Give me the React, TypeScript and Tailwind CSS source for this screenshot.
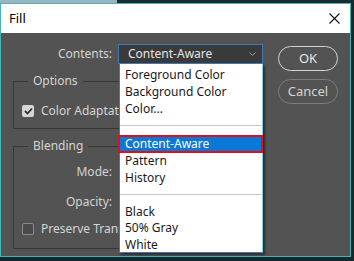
import * as React from 'react';

const font = { fontFamily: '"Noto Sans", "Open Sans", sans-serif' };

const upper = ['Foreground Color', 'Background Color', 'Color...'];
const middle = ['Pattern', 'History'];
const lower = ['Black', '50% Gray', 'White'];

function Item({ label }: { label: string }) {
  return <div className="flex h-[16.7px] items-center pl-[5px] text-[12px] text-[#1a1a1a]">{label}</div>;
}

function Separator() {
  return (
    <div className="flex h-[17.5px] items-center">
      <div className="h-px w-full bg-[#c8c8c8]" />
    </div>
  );
}

function Checkbox({ checked }: { checked?: boolean }) {
  if (checked) {
    return (
      <span className="flex h-[12px] w-[12px] items-center justify-center rounded-[2px] bg-[#d6d6d6]">
        <svg width="9" height="8" viewBox="0 0 9 8">
          <polyline points="1,4 3.5,6.5 8,1.5" fill="none" stroke="#333" strokeWidth="1.8" />
        </svg>
      </span>
    );
  }
  return <span className="h-[12px] w-[12px] rounded-[2px] border border-[#8a8a8a] bg-[#4a4a4a]" />;
}

function ContentsSelect() {
  return (
    <div className="relative w-[145px]">
      <div className="flex h-[20px] items-center justify-between border border-[#3f77b8] bg-[#3a3a3a] pl-[9px] pr-[6px] text-[12px] text-[#e4e4e4]">
        <span>Content-Aware</span>
        <svg width="7" height="4" viewBox="0 0 7 4">
          <polyline points="0.5,0.5 3.5,3.5 6.5,0.5" fill="none" stroke="#9a9a9a" strokeWidth="1" />
        </svg>
      </div>
      <div className="absolute left-[1px] right-0 top-full z-10 h-[189px] border-l border-r border-b border-l-[#3f77b8] border-r-[#7fd0e8] border-b-[#3f77b8] bg-white pt-[3px] shadow-[2px_2px_2px_rgba(0,0,0,0.45)]">
        {upper.map((l) => (
          <Item key={l} label={l} />
        ))}
        <Separator />
        <div className="-ml-[2px] -mr-px flex h-[18px] items-center border-2 border-[#e0101a] bg-[#0a78d4] pl-[5px] text-[12px] text-white">
          Content-Aware
        </div>
        {middle.map((l) => (
          <Item key={l} label={l} />
        ))}
        <Separator />
        {lower.map((l) => (
          <Item key={l} label={l} />
        ))}
      </div>
    </div>
  );
}

export default function App() {
  return (
    <div className="relative h-[261px] w-[354px] overflow-hidden bg-[#17282d]" style={font}>
      <div className="flex h-[3px]">
        <div className="w-[117px] bg-[#9db3bf]" />
        <div className="flex-1 bg-[#1b2b30]" />
      </div>
      <div className="flex h-[254px] w-[351px] flex-col border border-[#48b4b8]">
        {/* title bar */}
        <div className="flex h-[29px] items-center justify-between bg-white pl-[8px] pr-[10px]">
          <span className="text-[13px] text-black">Fill</span>
          <svg width="11" height="11" viewBox="0 0 11 11">
            <path d="M0.5 0.5 L10.5 10.5 M10.5 0.5 L0.5 10.5" stroke="#111" strokeWidth="1.1" />
          </svg>
        </div>

        {/* body */}
        <div className="flex flex-1 bg-[#535353] pt-[11px] text-[12px] text-[#d4d4d4]">
          <div className="flex w-[262px] flex-col">
            <div className="flex items-center">
              <span className="w-[112px] pr-[1px] text-right">Contents:</span>
              <span className="ml-[5px]">
                <ContentsSelect />
              </span>
            </div>

            <fieldset className="ml-[12px] mr-[8px] mt-[9px] border border-[#383838] pb-[9px]">
              <legend className="ml-[14px] px-[5px] leading-[16px]">Options</legend>
              <div className="flex items-center gap-[7px] pl-[8px] pt-[14px] leading-[16px]">
                <Checkbox checked />
                <span className="whitespace-nowrap">Color Adaptation</span>
              </div>
            </fieldset>

            <fieldset className="ml-[12px] mr-[8px] mt-[9px] border border-[#383838] pb-[11px]">
              <legend className="ml-[14px] px-[5px] leading-[16px]">Blending</legend>
              <div className="w-[98px] pt-[10px] text-right leading-[16px]">Mode:</div>
              <div className="mt-[14px] w-[98px] text-right leading-[16px]">Opacity:</div>
              <div className="mt-[11px] flex items-center gap-[7px] pl-[8px] leading-[16px]">
                <Checkbox />
                <span className="whitespace-nowrap">Preserve Transparency</span>
              </div>
            </fieldset>
          </div>

          <div className="ml-[15px] flex w-[60px] flex-col gap-[8px] pt-[2px]">
            <button className="h-[25px] rounded-full border-[1.5px] border-[#d4d4d4] text-[13px] text-[#e6e6e6]">
              OK
            </button>
            <button className="h-[25px] rounded-full border border-[#7c7c7c] text-[13px] text-[#d4d4d4]">
              Cancel
            </button>
          </div>
        </div>
      </div>
    </div>
  );
}
